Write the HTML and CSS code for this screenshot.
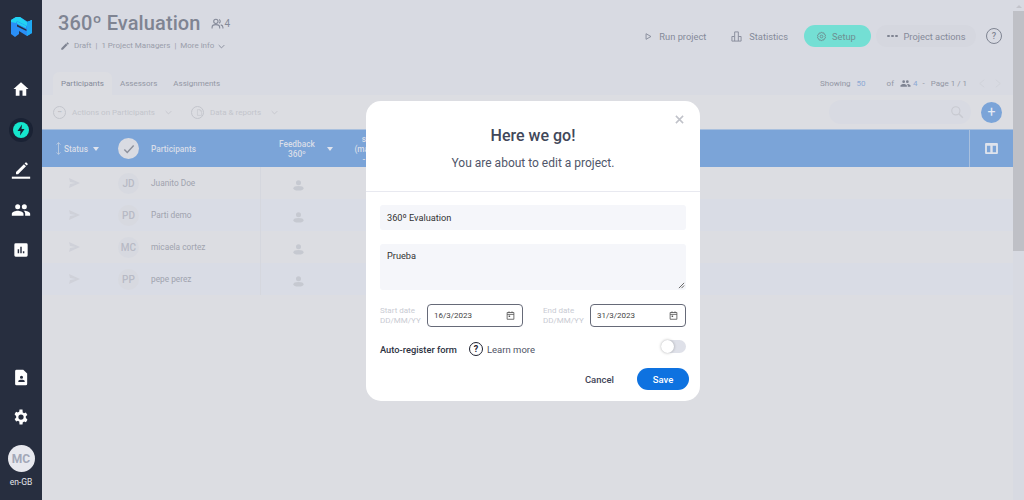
FILE: index.html
```html
<!DOCTYPE html>
<html lang="en">
<head>
<meta charset="utf-8">
<title>360º Evaluation</title>
<link rel="stylesheet" href="styles.css">
</head>
<body>
<div class="app">
  <nav class="sidebar">
    <svg class="logo" viewBox="0 0 21 21" width="21" height="21"><path d="M0 4 L5 1 H9 L17 6 L21 4 V17 L16 20 L8 15 V18 L4 21 L0 18 Z" fill="#2a8ff6"/><path d="M0 4 L5 1 H9 L16 6 L21 4 V8 L16 10 L6 5 L5 7 L0 6 Z" fill="#22d3f2"/><path d="M16 6 L21 4 V17 L16 20 Z" fill="#1fa9f4"/><path d="M6 8.500 L15.500 13.500 V15 L6 10.500 Z" fill="#272e3f"/><path d="M6 5.500 L15 10 L15 12 L6 7.500 Z" fill="#22d3f2"/></svg>
    <svg class="nav-ico home" viewBox="0 0 24 24" width="18" height="18"><path d="M10 21v-7h4v7h5v-9h3L12 3 2 12h3v9z" fill="#fff"/></svg>
    <span class="bolt"><svg viewBox="0 0 24 24" width="24" height="24"><circle cx="12" cy="12" r="12" fill="#1a2234"/><circle cx="12" cy="12" r="8" fill="#15e6cd"/><path d="M13 6.500 8.500 13h3L11 17.500l4.500-6.500h-3z" fill="#1a2234"/></svg></span>
    <svg class="nav-ico pen" viewBox="0 0 24 24" width="20" height="20"><path d="M4 16.500V19h2.500L16 9.500 13.500 7zM18 7.500a.7.7 0 0 0 0-1L16.500 5a.7.7 0 0 0-1 0L14.300 6.200l2.500 2.500z" fill="#fff" transform="translate(2 -2)"/><rect x="1" y="20" width="22" height="2.500" fill="#fff"/></svg>
    <svg class="nav-ico team" viewBox="0 0 24 24" width="20" height="20"><path d="M16 11a3 3 0 1 0 0-6 3 3 0 0 0 0 6zm-8 0a3 3 0 1 0 0-6 3 3 0 0 0 0 6zm0 2c-2.300 0-7 1.200-7 3.500V19h14v-2.500C15 14.200 10.300 13 8 13zm8 0h-1c1.200.9 2 2 2 3.500V19h6v-2.500c0-2.300-4.700-3.500-7-3.500z" fill="#fff"/></svg>
    <svg class="nav-ico chart" viewBox="0 0 24 24" width="16" height="16"><path fill-rule="evenodd" d="M4 2h16a2 2 0 0 1 2 2v16a2 2 0 0 1-2 2H4a2 2 0 0 1-2-2V4a2 2 0 0 1 2-2zm3 9v6h2.200v-6zm3.900-4v10h2.200V7zm3.900 7v3H17v-3z" fill="#fff"/></svg>
    <div class="side-spacer"></div>
    <svg class="nav-ico doc" viewBox="0 0 24 24" width="17" height="17"><path fill-rule="evenodd" d="M5 1h9.500L20 6.500V21a2 2 0 0 1-2 2H5a2 2 0 0 1-2-2V3a2 2 0 0 1 2-2zm7 8.500a2.200 2.200 0 1 0 0 4.400 2.200 2.200 0 0 0 0-4.400zM7.500 18.500h9V17c0-1.300-2.700-2-4.500-2s-4.500.7-4.500 2z" fill="#fff"/></svg>
    <svg class="nav-ico gear" viewBox="0 0 24 24" width="18" height="18"><path fill-rule="evenodd" d="M19.400 13a7.600 7.600 0 0 0 0-2l2.100-1.600-2-3.500-2.500 1a7.500 7.500 0 0 0-1.700-1L15 2h-4l-.4 2.900a7.500 7.500 0 0 0-1.700 1l-2.500-1-2 3.500L6.600 11a7.600 7.600 0 0 0 0 2l-2.100 1.600 2 3.500 2.500-1a7.500 7.500 0 0 0 1.700 1L11 22h4l.4-2.900a7.500 7.500 0 0 0 1.700-1l2.500 1 2-3.500zM13 15.500a3.500 3.500 0 1 1 0-7 3.500 3.500 0 0 1 0 7z" fill="#fff" transform="translate(-1 0)"/></svg>
    <div class="me">MC</div>
    <div class="locale">en-GB</div>
  </nav>

  <main class="main">
    <header class="top">
      <div class="top-row">
        <div class="title-block">
          <div class="title-line">
            <h1>360º Evaluation</h1>
            <svg viewBox="0 0 24 24" width="13" height="13" class="people"><circle cx="9" cy="8" r="4" fill="none" stroke="#858a99" stroke-width="2"/><path d="M2 21v-2c0-3 3-5 7-5s7 2 7 5v2M15 4.500a4 4 0 0 1 0 7M18 14.500c2.500.7 4 2.300 4 4.500v2" fill="none" stroke="#858a99" stroke-width="2"/></svg>
            <span class="count">4</span>
          </div>
          <div class="meta">
            <svg viewBox="0 0 24 24" width="10" height="10"><path d="M3 17.200V21h3.800L18 9.800 14.200 6zM20.700 7a1 1 0 0 0 0-1.400l-2.300-2.300a1 1 0 0 0-1.400 0l-1.800 1.800 3.700 3.700z" fill="#7f8492"/></svg>
            <span>Draft</span><span>|</span><span>1 Project Managers</span><span>|</span><span>More info</span>
            <svg viewBox="0 0 10 6" width="7" height="5"><path d="M1 1l4 4 4-4" fill="none" stroke="#858a99" stroke-width="1.300"/></svg>
          </div>
        </div>
        <div class="actions">
          <span class="act run"><svg viewBox="0 0 10 10" width="7" height="7"><path d="M1.500 1v8l7-4z" fill="none" stroke="#858a99" stroke-width="1.300"/></svg>Run project</span>
          <span class="act stats"><svg viewBox="0 0 24 24" width="11" height="11"><path d="M2 22V12h6V2h8v10h6v10zM8 12v10M16 12v10" fill="none" stroke="#858a99" stroke-width="2"/></svg>Statistics</span>
          <span class="act setup"><svg viewBox="0 0 24 24" width="11" height="11"><path d="M12 2l2 2.600 3.300-.5.700 3.200 3 1.600-1.400 3 1.400 3-3 1.600-.7 3.200-3.300-.5L12 22l-2-2.600-3.300.5-.7-3.200-3-1.600 1.400-3-1.400-3 3-1.600.7-3.200 3.300.5z" fill="none" stroke="#6d8f92" stroke-width="2"/><circle cx="12" cy="12" r="3" fill="none" stroke="#6d8f92" stroke-width="2"/></svg>Setup</span>
          <span class="act more"><span class="dots"><i></i><i></i><i></i></span>Project actions</span>
          <span class="help">?</span>
        </div>
      </div>
      <div class="tab-row">
        <div class="tabs">
          <span class="tab active">Participants</span>
          <span class="tab">Assessors</span>
          <span class="tab">Assignments</span>
        </div>
        <div class="paging">
          <span>Showing</span><span class="num size">50</span><span class="of">of</span>
          <svg viewBox="0 0 24 24" width="11" height="11"><path d="M16 11a3 3 0 1 0 0-6 3 3 0 0 0 0 6zm-8 0a3 3 0 1 0 0-6 3 3 0 0 0 0 6zm0 2c-2.300 0-7 1.200-7 3.500V19h14v-2.500C15 14.200 10.300 13 8 13zm8 0h-1c1.200.9 2 2 2 3.500V19h6v-2.500c0-2.300-4.700-3.500-7-3.500z" fill="#7f8492"/></svg>
          <span class="num">4</span><span class="sep">-</span><span>Page 1 / 1</span>
          <svg class="pg-first" viewBox="0 0 8 12" width="6" height="11"><path d="M7 1L1 6l6 5" fill="none" stroke="#cfd1d9" stroke-width="1.200"/></svg>
          <svg class="pg-next" viewBox="0 0 8 12" width="6" height="11"><path d="M1 1l6 5-6 5" fill="none" stroke="#cfd1d9" stroke-width="1.200"/></svg>
        </div>
      </div>
    </header>

    <div class="toolbar">
      <span class="tool"><span class="ring ring-dots">•••</span>Actions on Participants<svg viewBox="0 0 10 6" width="7" height="5"><path d="M1 1l4 4 4-4" fill="none" stroke="#c3c5cc" stroke-width="1.200"/></svg></span>
      <span class="tool"><span class="ring"><svg viewBox="0 0 24 24" width="9" height="9"><path d="M5 2h9l5 5v15H5zM14 2v5h5" fill="none" stroke="#c3c5cc" stroke-width="2"/></svg></span>Data &amp; reports<svg viewBox="0 0 10 6" width="7" height="5"><path d="M1 1l4 4 4-4" fill="none" stroke="#c3c5cc" stroke-width="1.200"/></svg></span>
      <span class="search"><svg viewBox="0 0 24 24" width="14" height="14"><circle cx="10" cy="10" r="7" fill="none" stroke="#c8cad1" stroke-width="2"/><path d="M15 15l7 7" stroke="#c8cad1" stroke-width="2.500"/></svg></span>
      <span class="add">+</span>
    </div>

    <div class="thead">
      <div class="col-status"><svg viewBox="0 0 10 20" width="7" height="13"><path d="M5 1v18M2 4l3-3 3 3M2 16l3 3 3-3" fill="none" stroke="#d6dbe6" stroke-width="1"/></svg>Status<i class="caret"></i></div>
      <div class="col-check"><span class="check"><svg viewBox="0 0 24 24" width="14" height="14"><path d="M4 13l5 5L20 6" fill="none" stroke="#8d919c" stroke-width="2.500"/></svg></span></div>
      <div class="col-name">Participants</div>
      <div class="col-fb"><span>Feedback<br>360º</span><i class="caret"></i></div>
      <div class="col-next">s<br>(man<br>-</div>
      <div class="col-fill"></div>
      <div class="col-view"><svg viewBox="0 0 14 12" width="13" height="11"><path fill-rule="evenodd" d="M1 0h12a1 1 0 0 1 1 1v10a1 1 0 0 1-1 1H1a1 1 0 0 1-1-1V1a1 1 0 0 1 1-1zm1 3v7h3.700V3zm6.300 0v7H12V3z" fill="#dfe3ec"/></svg></div>
    </div>

    <div class="row">
      <div class="col-status"><svg class="send" viewBox="0 0 24 24" width="13" height="12"><path d="M1 2l22 10L1 22l2-8 11-2-11-2z" fill="#cfd1d9"/></svg></div>
      <div class="col-check"><span class="avatar">JD</span></div>
      <div class="col-name">Juanito Doe</div>
      <div class="col-fb"><svg class="person" viewBox="0 0 24 24" width="11" height="12"><circle cx="12" cy="7" r="5.500" fill="#c6c9d1"/><ellipse cx="12" cy="19" rx="11" ry="5" fill="#c6c9d1"/></svg></div>
      <div class="col-rest"></div>
    </div>
    <div class="row alt">
      <div class="col-status"><svg class="send" viewBox="0 0 24 24" width="13" height="12"><path d="M1 2l22 10L1 22l2-8 11-2-11-2z" fill="#cfd1d9"/></svg></div>
      <div class="col-check"><span class="avatar">PD</span></div>
      <div class="col-name">Parti demo</div>
      <div class="col-fb"><svg class="person" viewBox="0 0 24 24" width="11" height="12"><circle cx="12" cy="7" r="5.500" fill="#c6c9d1"/><ellipse cx="12" cy="19" rx="11" ry="5" fill="#c6c9d1"/></svg></div>
      <div class="col-rest"></div>
    </div>
    <div class="row">
      <div class="col-status"><svg class="send" viewBox="0 0 24 24" width="13" height="12"><path d="M1 2l22 10L1 22l2-8 11-2-11-2z" fill="#cfd1d9"/></svg></div>
      <div class="col-check"><span class="avatar">MC</span></div>
      <div class="col-name">micaela cortez</div>
      <div class="col-fb"><svg class="person" viewBox="0 0 24 24" width="11" height="12"><circle cx="12" cy="7" r="5.500" fill="#c6c9d1"/><ellipse cx="12" cy="19" rx="11" ry="5" fill="#c6c9d1"/></svg></div>
      <div class="col-rest"></div>
    </div>
    <div class="row alt">
      <div class="col-status"><svg class="send" viewBox="0 0 24 24" width="13" height="12"><path d="M1 2l22 10L1 22l2-8 11-2-11-2z" fill="#cfd1d9"/></svg></div>
      <div class="col-check"><span class="avatar">PP</span></div>
      <div class="col-name">pepe perez</div>
      <div class="col-fb"><svg class="person" viewBox="0 0 24 24" width="11" height="12"><circle cx="12" cy="7" r="5.500" fill="#c6c9d1"/><ellipse cx="12" cy="19" rx="11" ry="5" fill="#c6c9d1"/></svg></div>
      <div class="col-rest"></div>
    </div>
  </main>

  <div class="scrollbar"><span class="arrow"></span><span class="thumb"></span></div>
</div>

<section class="modal">
  <span class="close">
    <svg viewBox="0 0 10 10" width="9" height="9"><path d="M1 1l8 8M9 1l-8 8" stroke="#c0c2c9" stroke-width="1.700"/></svg>
  </span>
  <div class="modal-head">
    <h2>Here we go!</h2>
    <p>You are about to edit a project.</p>
  </div>
  <div class="modal-body">
    <div class="field">360º Evaluation</div>
    <div class="field area">Prueba
      <svg class="grip" viewBox="0 0 8 8" width="7" height="7"><path d="M1 7l6-6M4 7l3-3" stroke="#555" stroke-width="1"/></svg>
    </div>
    <div class="dates">
      <div class="date-group">
        <label class="date-label">Start date<br>DD/MM/YY</label>
        <div class="date">16/3/2023<svg viewBox="0 0 24 24" width="9" height="9"><path d="M3 4h18v18H3zM3 9h18M8 1v4M16 1v4" fill="none" stroke="#555" stroke-width="2.200"/><rect x="7" y="12" width="4" height="4" fill="#555"/></svg></div>
      </div>
      <div class="date-group">
        <label class="date-label">End date<br>DD/MM/YY</label>
        <div class="date">31/3/2023<svg viewBox="0 0 24 24" width="9" height="9"><path d="M3 4h18v18H3zM3 9h18M8 1v4M16 1v4" fill="none" stroke="#555" stroke-width="2.200"/><rect x="7" y="12" width="4" height="4" fill="#555"/></svg></div>
      </div>
    </div>
    <div class="register">
      <span class="reg-label">Auto-register form</span>
      <span class="learn"><span class="q">?</span>Learn more</span>
      <span class="toggle"><i></i></span>
    </div>
    <div class="buttons">
      <span class="cancel">Cancel</span>
      <span class="save">Save</span>
    </div>
  </div>
</section>
</body>
</html>
```
FILE: styles.css
```css
* { box-sizing: border-box; }
html, body { margin: 0; height: 100%; overflow: hidden; }
body { font-family: Roboto, "Liberation Sans", sans-serif; color: #858a99; background: #dcdde2; }

.app { display: flex; height: 500px; }

.sidebar { width: 42px; flex: none; background: #272e3f; display: flex; flex-direction: column; align-items: center; padding-top: 16px; }
.logo { display: block; }
.nav-ico { display: block; flex: none; }
.home { margin-top: 43px; }
.bolt { width: 24px; height: 24px; margin-top: 20px; display: block; }
.bolt svg { display: block; }
.pen { margin-top: 18px; }
.team { margin-top: 20px; }
.chart { margin-top: 22px; }
.side-spacer { flex: 1; }
.gear { margin-top: 22px; }
.me { width: 27px; height: 27px; margin-top: 19px; border-radius: 50%; background: #e7e8ee; color: #a3a8b8; font-size: 12px; font-weight: 700; display: flex; align-items: center; justify-content: center; }
.locale { font-size: 8.500px; font-weight: 400; color: #e4e6ec; margin-top: 5px; margin-bottom: 13px; line-height: 10px; }

.main { flex: 1; min-width: 0; display: flex; flex-direction: column; background: #dcdde2; }

.top { background: #d8dae2; height: 95px; display: flex; flex-direction: column; }
.top-row { display: flex; justify-content: space-between; height: 72px; }
.title-block { padding: 10px 0 0 16px; }
.title-line { display: flex; align-items: center; height: 26px; }
h1 { margin: 0; font-size: 20px; font-weight: 500; color: #7f8492; letter-spacing: 0.1px; line-height: 26px; white-space: nowrap; }
.people { margin-left: 10px; }
.count { font-size: 10px; margin-left: 1px; color: #858a99; }
.meta { display: flex; align-items: center; gap: 4px; margin: 4px 0 0 2px; font-size: 8px; line-height: 12px; color: #9a9eab; white-space: nowrap; letter-spacing: -0.02px; }

.actions { display: flex; align-items: center; height: 22px; margin-top: 25px; padding-right: 11px; font-size: 9.300px; }
.act { display: flex; align-items: center; height: 22px; white-space: nowrap; color: #858a99; font-weight: 400; }
.act svg { flex: none; }
.run { gap: 7px; margin-right: 25px; }
.stats { gap: 7px; margin-right: 16px; }
.setup { gap: 5px; width: 67px; padding-left: 12px; background: #74dfd4; border-radius: 11px; color: #6d8f92; margin-right: 5px; }
.more { gap: 6px; width: 100px; padding-left: 11px; background: #d5d7df; border-radius: 11px; margin-right: 10px; }
.dots { display: flex; gap: 1.500px; }
.dots i { width: 2.500px; height: 2.500px; border-radius: 50%; background: #7f8492; }
.help { width: 16px; height: 16px; border: 1px solid #7f8492; border-radius: 50%; font-size: 9px; font-weight: 500; display: flex; align-items: center; justify-content: center; color: #7f8492; }

.tab-row { display: flex; justify-content: space-between; height: 23px; }
.tabs { display: flex; font-size: 8px; padding-left: 11px; }
.tab { padding: 0 8px; display: flex; align-items: center; color: #9397a4; }
.tab.active { background: #dcdde2; border-radius: 6px 6px 0 0; color: #858a99; }
.paging { display: flex; align-items: center; height: 22px; font-size: 8px; color: #9397a4; padding-right: 12px; white-space: nowrap; }
.paging .num { color: #8da9d4; margin-left: 2px; }
.paging .size { margin-left: 6px; margin-right: 21px; }
.of { margin-right: 6px; }
.sep { margin: 0 6px 0 5px; }
.pg-first { margin-left: 12px; }
.pg-next { margin-left: 10px; }

.toolbar { height: 34px; flex: none; display: flex; align-items: center; padding: 0 11px 0 11px; font-size: 8px; color: #c3c5cc; }
.tool { display: flex; align-items: center; white-space: nowrap; gap: 6px; margin-right: 19px; }
.tool svg:last-child { margin-left: 4px; }
.ring { width: 13px; height: 13px; border: 1px solid #c3c5cc; border-radius: 50%; display: flex; align-items: center; justify-content: center; font-size: 5px; letter-spacing: -0.5px; }
.ring-dots { color: #b4b6be; }
.search { margin-left: auto; width: 142px; height: 24px; border-radius: 12px; background: #d8dae2; display: flex; align-items: center; justify-content: flex-end; padding-right: 7px; }
.add { width: 21px; height: 21px; margin-left: 10px; border-radius: 50%; background: #7ba4d8; color: #e6ebf5; font-size: 14px; display: flex; align-items: center; justify-content: center; }

.thead, .row { display: flex; align-items: center; flex: none; }
.thead { height: 38px; background: #7ba4d8; border-top: 1px solid #a9c0de; color: #d8dde8; font-size: 8.300px; font-weight: 500; }
.row { height: 32px; background: #dcdde2; font-size: 8.300px; color: #a0a3ae; }
.row.alt { background: #d9dce5; }

.col-status { width: 76px; padding-left: 13px; display: flex; align-items: center; gap: 2px; height: 100%; flex: none; }
.col-check { width: 21px; height: 100%; display: flex; align-items: center; justify-content: center; margin-right: 12px; flex: none; }
.col-name { width: 109px; height: 100%; display: flex; align-items: center; white-space: nowrap; flex: none; }
.col-fb { width: 69px; height: 100%; display: flex; align-items: center; text-align: center; line-height: 10px; flex: none; }
.row .col-fb { box-shadow: inset 1px 0 0 #d5d7de; padding-left: 33px; }
.thead .col-fb { padding-left: 19px; gap: 9px; }
.col-next { width: 70px; text-align: center; line-height: 10px; flex: none; overflow: hidden; }
.col-fill { flex: 1; }
.col-view { width: 44px; height: 100%; border-left: 1px solid #a9c0de; display: flex; align-items: center; justify-content: center; flex: none; }
.col-rest { flex: 1; }
.row .col-status { padding-left: 26px; }
.person { margin-top: 3px; }

.caret { width: 0; height: 0; border-left: 3.500px solid transparent; border-right: 3.500px solid transparent; border-top: 4px solid #e0e4ee; margin-left: 3px; }
.check { width: 21px; height: 21px; border-radius: 50%; background: #d9dbe2; display: flex; align-items: center; justify-content: center; }
.avatar { width: 21px; height: 21px; border-radius: 50%; background: #d7d9e0; color: #b7bac5; font-size: 10px; font-weight: 500; display: flex; align-items: center; justify-content: center; }

.scrollbar { width: 11px; flex: none; background: #d8dae2; display: flex; flex-direction: column; align-items: center; }
.arrow { width: 0; height: 0; margin-top: 5px; border-left: 3px solid transparent; border-right: 3px solid transparent; border-bottom: 3px solid #c3c4cb; }
.thumb { width: 100%; height: 240px; margin-top: 3px; background: #bfc0c6; }

.modal { position: absolute; left: 366px; top: 101px; width: 334px; height: 300px; background: #fff; border-radius: 15px; color: #3f4557; }
.close { position: absolute; right: 16px; top: 14px; display: block; line-height: 0; }
.modal-head { height: 91px; border-bottom: 1px solid #e8e9f0; text-align: center; padding-top: 25px; }
h2 { margin: 0; font-size: 16px; font-weight: 500; line-height: 20px; color: #414759; }
.modal-head p { margin: 9px 0 0; font-size: 12px; line-height: 16px; color: #50566a; }
.modal-body { padding: 13px 14px 0; }
.field { height: 25px; padding: 0 7px; border-radius: 3px; background: #f5f6fa; font-size: 9.200px; color: #333; display: flex; align-items: center; }
.field.area { height: 46px; margin-top: 14px; align-items: flex-start; padding-top: 6px; position: relative; line-height: 12px; }
.grip { position: absolute; right: 1px; bottom: 1px; }
.dates { display: flex; justify-content: space-between; margin-top: 14px; }
.date-group { display: flex; align-items: center; gap: 7px; }
.date-label { font-size: 8px; line-height: 10px; color: #c9cbd3; width: 40px; white-space: nowrap; }
.date { width: 96px; height: 23px; border: 1px solid #666a78; border-radius: 4px; font-size: 8px; color: #444; display: flex; align-items: center; justify-content: space-between; padding: 0 7px 0 6px; }
.register { display: flex; align-items: center; margin-top: 13px; height: 18px; font-size: 9.300px; color: #2d3242; }
.reg-label { font-weight: 500; margin-right: 12px; }
.learn { display: flex; align-items: center; gap: 4px; color: #4f5465; font-size: 9.500px; }
.q { width: 14px; height: 14px; border: 1.500px solid #1d2130; border-radius: 50%; font-size: 9px; font-weight: 700; color: #1d2130; display: flex; align-items: center; justify-content: center; }
.toggle { margin-left: auto; width: 25px; height: 13px; margin-top: -5px; border-radius: 7px; background: #dfe1e9; position: relative; display: block; }
.toggle i { position: absolute; left: 0; top: 0; width: 13px; height: 13px; border-radius: 50%; background: #fff; box-shadow: 0 0 3px rgba(0,0,0,.3); }
.buttons { display: flex; justify-content: flex-end; align-items: center; margin-top: 10px; margin-right: -3px; font-size: 9.500px; font-weight: 500; }
.cancel { color: #3f4557; margin-right: 23px; }
.save { width: 52px; height: 22px; border-radius: 11px; background: #0e72e0; color: #fff; display: flex; align-items: center; justify-content: center; }
```
